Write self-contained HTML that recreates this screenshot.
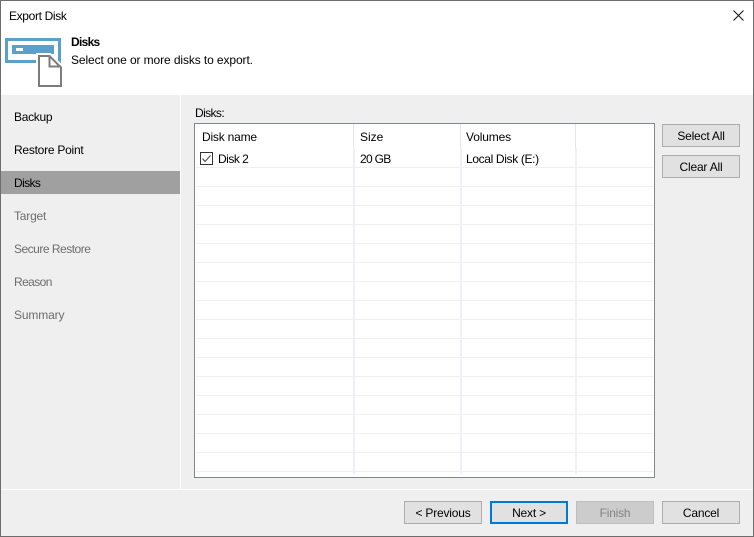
<!DOCTYPE html>
<html>
<head>
<meta charset="utf-8">
<style>
html,body{margin:0;padding:0;width:754px;height:537px;overflow:hidden;background:#fff}
body{position:relative;font-family:"Liberation Sans",sans-serif;font-size:12px;color:#000}
.a{position:absolute}
.t{position:absolute;white-space:nowrap;line-height:16px;height:16px}
.b{position:absolute;box-sizing:border-box;height:23px;background:#e1e1e1;border:1px solid #adadad;text-align:center;line-height:22px;white-space:nowrap;letter-spacing:-.2px}
.h{position:absolute;left:196px;width:458px;height:1px;background:#f0f0f0}
.v{position:absolute;width:2px;top:148px;height:326px;background:#eff1f6}
.hv{position:absolute;width:1px;top:124px;height:24px;background:#e5e5e5}
</style>
</head>
<body>
<div class="a" style="left:0;top:95px;width:754px;height:442px;background:#efefef"></div>
<div class="a" style="left:180px;top:95px;width:1px;height:394px;background:#fff"></div>
<div class="a" style="left:0;top:489px;width:754px;height:1px;background:#fff"></div>
<div class="a" style="left:0;top:171px;width:180px;height:23px;background:#a0a0a0"></div>

<div class="t" style="left:9px;top:8px;letter-spacing:-.35px">Export Disk</div>
<svg class="a" style="left:732px;top:8px" width="14" height="14" viewBox="0 0 14 14"><path d="M1.500 2.500L11.500 12.500M11.500 2.500L1.500 12.500" stroke="#111" stroke-width="1" fill="none"/></svg>

<svg class="a" style="left:0;top:30px" width="70" height="60" viewBox="0 0 70 60">
<path d="M5 8H61V33H5Z" fill="#5ba0cb"/>
<path d="M8 11H58V30H8Z" fill="#fff"/>
<path d="M12 15H54V24H12Z" fill="#5ba0cb"/>
<path d="M16 18H23V21H16Z" fill="#fff"/>
<path d="M36 23H50.500L64 36.500V60H36Z" fill="#fff"/>
<path d="M39 26H49.500L61 37.500V56H39Z" fill="#fff" stroke="#7c7c7c" stroke-width="2"/>
<path d="M49.500 26V36.500H61" fill="none" stroke="#7c7c7c" stroke-width="2"/>
</svg>

<div class="t" style="left:71px;top:34px;font-weight:bold;letter-spacing:-.7px">Disks</div>
<div class="t" style="left:71px;top:52px;letter-spacing:-.1px">Select one or more disks to export.</div>

<div class="t" style="left:14px;top:109px;letter-spacing:-.3px">Backup</div>
<div class="t" style="left:14px;top:142px;letter-spacing:-.25px">Restore Point</div>
<div class="t" style="left:14px;top:175px;letter-spacing:-.6px">Disks</div>
<div class="t" style="left:14px;top:208px;color:#6d6d6d;letter-spacing:-.2px">Target</div>
<div class="t" style="left:14px;top:241px;color:#6d6d6d;letter-spacing:-.5px">Secure Restore</div>
<div class="t" style="left:14px;top:274px;color:#6d6d6d;letter-spacing:-.6px">Reason</div>
<div class="t" style="left:14px;top:307px;color:#6d6d6d;letter-spacing:-.15px">Summary</div>

<div class="t" style="left:195px;top:105px;letter-spacing:-.6px">Disks:</div>
<div class="a" style="left:194px;top:123px;width:459px;height:353px;background:#fff;border:1px solid #82878c"></div>

<div class="hv" style="left:353px"></div>
<div class="hv" style="left:460px"></div>
<div class="hv" style="left:575px"></div>
<div class="v" style="left:353px"></div>
<div class="v" style="left:460px"></div>
<div class="v" style="left:575px"></div>

<div class="h" style="top:167px"></div>
<div class="h" style="top:186px"></div>
<div class="h" style="top:205px"></div>
<div class="h" style="top:224px"></div>
<div class="h" style="top:243px"></div>
<div class="h" style="top:262px"></div>
<div class="h" style="top:281px"></div>
<div class="h" style="top:300px"></div>
<div class="h" style="top:319px"></div>
<div class="h" style="top:338px"></div>
<div class="h" style="top:357px"></div>
<div class="h" style="top:376px"></div>
<div class="h" style="top:395px"></div>
<div class="h" style="top:414px"></div>
<div class="h" style="top:433px"></div>
<div class="h" style="top:452px"></div>
<div class="h" style="top:471px"></div>

<div class="t" style="left:202px;top:129px;letter-spacing:-.2px">Disk name</div>
<div class="t" style="left:360px;top:129px">Size</div>
<div class="t" style="left:466px;top:129px;letter-spacing:-.15px">Volumes</div>

<svg class="a" style="left:200px;top:152px" width="13" height="13" viewBox="0 0 13 13"><rect x=".5" y=".5" width="12" height="12" fill="#fff" stroke="#333"/><path d="M2.500 6.500L5 9.500L10.500 3.500" fill="none" stroke="#555" stroke-width="1.200"/></svg>
<div class="t" style="left:218px;top:151px;letter-spacing:-.5px">Disk 2</div>
<div class="t" style="left:360px;top:151px;letter-spacing:-.7px">20 GB</div>
<div class="t" style="left:466px;top:151px;letter-spacing:-.35px">Local Disk (E:)</div>

<div class="b" style="left:662px;top:124px;width:78px">Select All</div>
<div class="b" style="left:662px;top:155px;width:78px">Clear All</div>

<div class="b" style="left:404px;top:501px;width:78px">&lt; Previous</div>
<div class="b" style="left:490px;top:501px;width:78px;border:2px solid #0078d7;line-height:20px">Next &gt;</div>
<div class="b" style="left:576px;top:501px;width:78px;background:#ccc;border-color:#bfbfbf;color:#838383">Finish</div>
<div class="b" style="left:662px;top:501px;width:78px">Cancel</div>

<div class="a" style="left:0;top:0;width:752px;height:535px;border:1px solid #6d6d6d"></div>
</body>
</html>
